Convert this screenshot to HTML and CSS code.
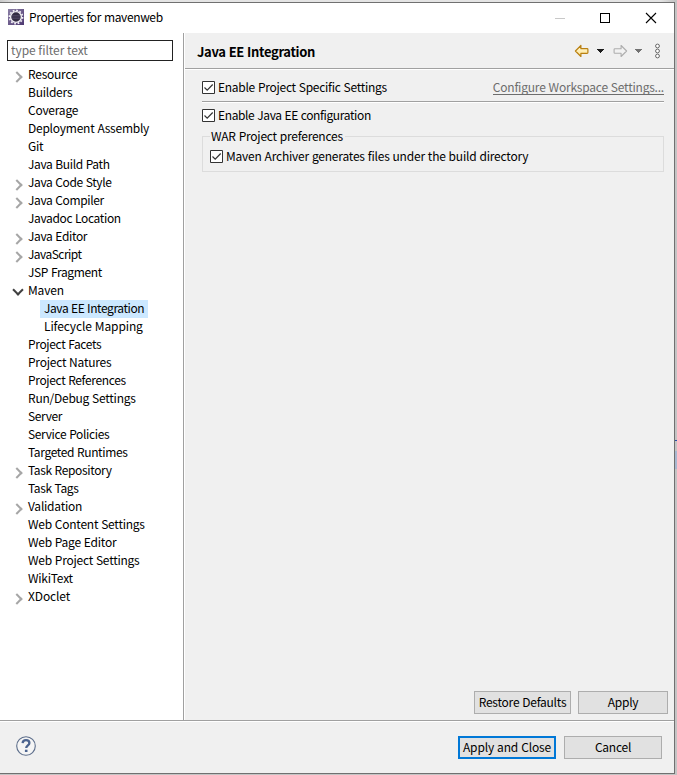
FILE: index.html
```
<!DOCTYPE html>
<html lang="en">
<head>
<meta charset="utf-8">
<title>Properties for mavenweb</title>
<link rel="stylesheet" href="styles.css">
</head>
<body>
<div class="window">
  <header class="titlebar">
    <svg class="app-icon" width="16" height="16" viewBox="0 0 16 16"><defs><linearGradient id="ag" x1="0" y1="0" x2="1" y2="1"><stop offset="0" stop-color="#8b80a6"/><stop offset="1" stop-color="#4d3770"/></linearGradient></defs><rect width="16" height="16" fill="url(#ag)"/><circle cx="8" cy="8" r="6.6" fill="none" stroke="#f4f2f7" stroke-width="1.6" stroke-dasharray="1.75 1.7"/><circle cx="8" cy="8" r="5.4" fill="#332c43" stroke="#f0eef4" stroke-width="1.4"/><path d="M4 6.5h8M3.6 8h8.8M4 9.5h8" stroke="#5b526e" stroke-width=".6"/></svg>
    <h1>Properties for mavenweb</h1>
    <svg class="controls" width="104" height="12" viewBox="0 0 104 12" fill="none" shape-rendering="crispEdges"><path d="M1 6.5h10" stroke="#c8c8c8"/><path d="M46.500 1.500h9v9h-9z" stroke="#000"/><path d="M92 1l10 10M102 1L92 11" stroke="#000" stroke-width="1.100" shape-rendering="auto"/></svg>
  </header>
  <div class="content">
    <nav class="sidebar">
      <input class="filter" type="text" placeholder="type filter text" aria-label="type filter text">
      <ul class="tree">
        <li class="closed"><span>Resource</span></li>
        <li><span>Builders</span></li>
        <li><span>Coverage</span></li>
        <li><span>Deployment Assembly</span></li>
        <li><span>Git</span></li>
        <li class="tight"><span>Java Build Path</span></li>
        <li class="closed tight"><span>Java Code Style</span></li>
        <li class="closed tight"><span>Java Compiler</span></li>
        <li class="tight"><span>Javadoc Location</span></li>
        <li class="closed tight"><span>Java Editor</span></li>
        <li class="closed tighter"><span>JavaScript</span></li>
        <li class="tight"><span>JSP Fragment</span></li>
        <li class="open loose"><span>Maven</span></li>
        <li class="child tight"><span class="selected">Java EE Integration</span></li>
        <li class="child loose"><span>Lifecycle Mapping</span></li>
        <li class="tight"><span>Project Facets</span></li>
        <li><span>Project Natures</span></li>
        <li class="tight"><span>Project References</span></li>
        <li><span>Run/Debug Settings</span></li>
        <li class="tight"><span>Server</span></li>
        <li class="tight"><span>Service Policies</span></li>
        <li class="tight"><span>Targeted Runtimes</span></li>
        <li class="closed tight"><span>Task Repository</span></li>
        <li class="tight"><span>Task Tags</span></li>
        <li class="closed"><span>Validation</span></li>
        <li><span>Web Content Settings</span></li>
        <li><span>Web Page Editor</span></li>
        <li><span>Web Project Settings</span></li>
        <li><span>WikiText</span></li>
        <li class="closed loose"><span>XDoclet</span></li>
      </ul>
    </nav>
    <main class="page">
      <div class="page-head">
        <h2>Java EE Integration</h2>
        <svg width="90" height="16" viewBox="0 0 90 16"><defs><linearGradient id="yg" x1="0" y1="0" x2="0" y2="1"><stop offset="0" stop-color="#fffbe0"/><stop offset="1" stop-color="#ffe28b"/></linearGradient></defs><path d="M1 8l5.500-5.500v3.200h6.200q.8 0 .8.800v3q0 .8-.8.800H6.500v3.200z" transform="translate(.4)" fill="url(#yg)" stroke="#b98012" stroke-width="1.200" stroke-linejoin="round"/><path d="M23 6h7v1h-1v1h-1v1h-1v1h-1V9h-1V8h-1V7h-1z" fill="#1c1c1c"/><path d="M53 8l-5.500-5.500v3.200h-6.200q-.8 0-.8.800v3q0 .8.8.800h6.200v3.200z" transform="translate(-.4)" fill="#f2f2f2" stroke="#adadad" stroke-width="1.100" stroke-linejoin="round"/><path d="M61 6h7v1h-1v1h-1v1h-1v1h-1V9h-1V8h-1V7h-1z" fill="#727272"/><g fill="#fff" stroke="#666"><circle cx="83.500" cy="3" r="1.900"/><circle cx="83.500" cy="8" r="1.900"/><circle cx="83.500" cy="13" r="1.900"/></g></svg>
      </div>
      <div class="page-body">
        <div class="setting-row">
          <label class="check"><svg width="13" height="13" viewBox="0 0 13 13"><path d="M.5.500h12v12H.5z" fill="#fff" stroke="#333"/><path d="M2.500 6.500l2.700 2.700L10.700 3.500" fill="none" stroke="#333" stroke-width="1.200"/></svg><span>Enable Project Specific Settings</span></label>
          <a class="link">Configure Workspace Settings...</a>
        </div>
        <label class="check check-ee"><svg width="13" height="13" viewBox="0 0 13 13"><path d="M.5.500h12v12H.5z" fill="#fff" stroke="#333"/><path d="M2.500 6.500l2.700 2.700L10.700 3.500" fill="none" stroke="#333" stroke-width="1.200"/></svg><span>Enable Java EE configuration</span></label>
        <fieldset>
          <legend>WAR Project preferences</legend>
          <label class="check"><svg width="13" height="13" viewBox="0 0 13 13"><path d="M.5.500h12v12H.5z" fill="#fff" stroke="#333"/><path d="M2.500 6.500l2.700 2.700L10.700 3.500" fill="none" stroke="#333" stroke-width="1.200"/></svg><span>Maven Archiver generates files under the build directory</span></label>
        </fieldset>
      </div>
      <div class="page-actions">
        <button class="restore">Restore Defaults</button>
        <button class="apply">Apply</button>
      </div>
    </main>
  </div>
  <footer class="footer">
    <svg class="help" width="22" height="22" viewBox="0 0 22 22"><circle cx="11" cy="11" r="9.300" fill="#f5f5f5" stroke="#5d6e8b" stroke-width="1.100"/><path d="M7.600 8.200C7.800 6 9.200 5.200 11 5.200c2 0 3.400 1 3.400 2.800 0 2.300-3.200 2.400-3.200 5" fill="none" stroke="#4c648f" stroke-width="2.300"/><path d="M9.900 14.700h2.600v2.300H9.900z" fill="#4c648f"/></svg>
    <button class="primary">Apply and Close</button>
    <button class="cancel">Cancel</button>
  </footer>
</div>
</body>
</html>
```
FILE: styles.css
```
* { box-sizing: border-box; }
body {
  margin: 0;
  width: 677px;
  height: 775px;
  padding: 2px 2px 1px 0;
  overflow: hidden;
  background:
    linear-gradient(#2d4fa5, #2d4fa5) 675px 440px / 2px 1px no-repeat,
    linear-gradient(#a9b8d0, #a9b8d0) 675px 451px / 2px 18px no-repeat,
    linear-gradient(#c4c4c4, #c4c4c4) 0 774px / 677px 1px no-repeat,
    linear-gradient(to right, #c9c9c9, #e4e4e4 15px, #e4e4e4 660px, #c4c4c4 675px);
  font: 12px/18px "Noto Sans CJK KR", "Noto Sans", sans-serif;
  letter-spacing: -.24px;
  word-spacing: .5px;
  color: #000;
}
.window {
  display: flex;
  flex-direction: column;
  width: 675px;
  height: 772px;
  border: solid #707070;
  border-width: 1px 1px 1px 0;
  background: #f0f0f0;
}
.titlebar {
  display: flex;
  align-items: center;
  height: 30px;
  padding: 0 16px 0 8px;
  background: #fff;
}
.app-icon { margin-top: -2px; }
h1 { margin: -2px auto 0 5px; font-size: 12px; font-weight: 400; line-height: 18px; letter-spacing: -.36px; }
.controls { margin-top: -1px; }
.content { display: flex; height: 687px; }
.sidebar {
  width: 184px;
  padding: 7px 0 0 7px;
  background: #fff;
  border-right: 1px solid #a0a0a0;
}
.filter {
  display: block;
  width: 166px;
  height: 21px;
  padding: 0 3px 2px;
  border: 1px solid #222;
  outline: 0;
  font: inherit;
  letter-spacing: -.05px;
}
.filter::placeholder { color: #6d6d6d; opacity: 1; }
.tree { list-style: none; margin: 5px 0 0; padding: 0; }
.tree li { position: relative; height: 18px; padding-left: 21px; line-height: 16px; white-space: nowrap; }
.tree .tight { letter-spacing: -.36px; }
.tree .tighter { letter-spacing: -.55px; }
.tree .loose { letter-spacing: -.12px; }
.tree .child { padding-left: 33px; }
.tree .child span { display: inline-block; height: 18px; padding: 0 4px; }
.tree .tight .selected { background: #cce8ff; letter-spacing: -.42px; }
.closed::before, .open::before {
  content: "";
  position: absolute;
  left: 6px;
  top: 7px;
  width: 6px;
  height: 6px;
  border: solid #a6a6a6;
  border-width: 2px 2px 0 0;
  transform: rotate(45deg);
}
.open::before { left: 7px; top: 4px; border-color: #404040; transform: rotate(135deg); }
.page { display: flex; flex-direction: column; flex: 1; border-left: 1px solid #fff; }
.page-head {
  display: flex;
  align-items: center;
  justify-content: space-between;
  height: 37px;
  padding: 0 10px 0 12px;
  border-bottom: 1px solid #fff;
  box-shadow: inset 0 -1px #a0a0a0;
}
h2 { margin: 2px 0 0; font-size: 13px; line-height: 18px; font-weight: 700; letter-spacing: -.34px; }
.page-body { padding: 8px 10px 0 17px; }
.setting-row {
  display: flex;
  justify-content: space-between;
  height: 25px;
  border-bottom: 1px solid #fff;
  box-shadow: inset 0 -1px #a0a0a0;
}
.check { display: flex; align-items: center; gap: 3px; height: 19px; white-space: nowrap; }
.check span { margin-top: -1px; }
.setting-row .check { letter-spacing: -.27px; }
.check-ee { margin-top: 3px; letter-spacing: -.37px; }
.link { height: 17px; color: #6d6d6d; border-bottom: 1px solid #6d6d6d; white-space: nowrap; letter-spacing: -.21px; }
fieldset { margin: 2px 0 0; padding: 0 7px; height: 45px; border: 1px solid #dcdcdc; min-width: 0; }
legend { padding: 0 2px 0 1px; height: 18px; line-height: 18px; }
fieldset .check { margin-top: 2px; letter-spacing: -.21px; }
.page-actions { display: flex; justify-content: flex-end; gap: 7px; margin-top: auto; padding: 0 6px 6px 0; }
button {
  height: 23px;
  padding: 0;
  border: 1px solid #adadad;
  background: #e1e1e1;
  font: inherit;
  letter-spacing: inherit;
  word-spacing: inherit;
  line-height: 20px;
  color: #000;
  white-space: nowrap;
}
.restore, .apply { padding-bottom: 1px; }
.restore { width: 97px; }
.apply { width: 90px; }
.footer {
  display: flex;
  align-items: center;
  gap: 8px;
  flex: 1;
  padding: 0 12px 0 15px;
  border-top: 1px solid #a0a0a0;
  box-shadow: inset 0 1px #fff;
}
.help { margin-right: auto; margin-top: -3px; }
.primary { width: 98px; padding-bottom: 2px; border: 2px solid #0078d7; line-height: 17px; letter-spacing: -.15px; }
.cancel { width: 98px; }
```
